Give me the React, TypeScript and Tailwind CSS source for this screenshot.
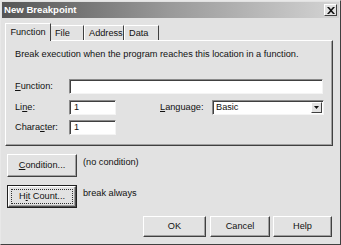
function U({ children }: { children: string }) {
  return <span className="underline underline-offset-[1px]">{children}</span>;
}

function Button({ children, w, h = "h-[22px]", isDefault = false }: { children: React.ReactNode; w: string; h?: string; isDefault?: boolean }) {
  if (isDefault) {
    return (
      <div className={`${w} ${h} border border-[#202020] bg-[#e2e2e2]`}>
        <div className="h-full border border-t-white border-l-white border-r-[#505050] border-b-[#505050] shadow-[inset_-1px_-1px_0_#a0a0a0] p-[2px]">
          <div className="h-full border border-dotted border-[#303030] flex items-center justify-center">{children}</div>
        </div>
      </div>
    );
  }
  return (
    <div
      className={`${w} ${h} flex items-center justify-center bg-[#e2e2e2] border border-t-white border-l-white border-r-[#404040] border-b-[#404040] shadow-[inset_-1px_-1px_0_#a0a0a0]`}
    >
      {children}
    </div>
  );
}

function Field({ w, value }: { w: string; value?: string }) {
  return (
    <div
      className={`${w} h-[15px] bg-white border border-t-[#8a8a8a] border-l-[#8a8a8a] border-r-[#f4f4f4] border-b-[#f4f4f4] shadow-[inset_1px_1px_0_#404040] flex items-center pl-[4px]`}
    >
      {value}
    </div>
  );
}

export default function App() {
  const tabs = ["File", "Address", "Data"];
  const tabWidths = ["w-[33px]", "w-[40px]", "w-[35px]"];

  return (
    <div className="w-[341px] h-[245px] overflow-hidden bg-[#e2e2e2] border border-t-[#e8e8e8] border-l-[#e8e8e8] border-r-[#404040] border-b-[#404040] p-[1px] font-['Liberation_Sans',sans-serif] text-[9.2px] leading-none text-[#111]">
      {/* title bar */}
      <div className="h-[16px] flex items-center justify-between pl-[2px] pr-[2px] bg-gradient-to-r from-[#565656] via-[#9a9a9a] to-[#d4d4d4]">
        <span className="font-bold text-white text-[9.6px]">New Breakpoint</span>
        <div className="w-[13px] h-[12px] flex items-center justify-center bg-[#e2e2e2] border border-t-white border-l-white border-r-[#404040] border-b-[#404040]">
          <svg width="8" height="7" viewBox="0 0 8 7">
            <path d="M0 0h2l2 2.3L6 0h2L5 3.5 8 7H6L4 4.7 2 7H0l3-3.5z" fill="#111" />
          </svg>
        </div>
      </div>

      <div className="ml-[3px] mt-[5px] w-[328px]">
        {/* tabs */}
        <div className="flex items-end h-[17px] pl-[2px]">
          <div className="relative z-10 -mb-px w-[46px] h-[18px] bg-[#e2e2e2] border border-b-0 border-t-white border-l-white border-r-[#404040] -ml-[2px] flex items-start justify-center pt-[4px]">
            Function
          </div>
          {tabs.map((t, i) => (
            <div
              key={t}
              className={`${tabWidths[i]} h-[15px] border border-b-0 border-t-white border-l-white border-r-[#404040] flex items-start pl-[4px] pt-[3px] ${i === 0 ? "border-l-0" : ""}`}
            >
              {t}
            </div>
          ))}
        </div>

        {/* panel */}
        <div className="h-[106px] border border-t-white border-l-white border-r-[#404040] border-b-[#404040] shadow-[inset_-1px_-1px_0_#a0a0a0] pl-[9px] pt-[9px]">
          <div>Break execution when the program reaches this location in a function.</div>

          <div className="mt-[20px] flex items-center">
            <span className="w-[54px]">
              <U>F</U>unction:
            </span>
            <Field w="w-[254px]" />
          </div>

          <div className="mt-[6px] flex items-center">
            <span className="w-[54px]">
              Li<U>n</U>e:
            </span>
            <Field w="w-[47px]" value="1" />
            <span className="ml-[44px] w-[52px]">
              <U>L</U>anguage:
            </span>
            <div className="w-[112px] h-[15px] bg-white border border-t-[#8a8a8a] border-l-[#8a8a8a] border-r-[#f4f4f4] border-b-[#f4f4f4] shadow-[inset_1px_1px_0_#404040] flex items-center justify-between pl-[3px] pr-[1px]">
              <span>Basic</span>
              <div className="w-[11px] h-[11px] bg-[#e2e2e2] border border-t-white border-l-white border-r-[#404040] border-b-[#404040] flex items-center justify-center">
                <svg width="5" height="3" viewBox="0 0 5 3">
                  <path d="M0 0h5L2.5 3z" fill="#111" />
                </svg>
              </div>
            </div>
          </div>

          <div className="mt-[5px] flex items-center">
            <span className="w-[54px]">
              Chara<U>c</U>ter:
            </span>
            <Field w="w-[47px]" value="1" />
          </div>
        </div>

        {/* condition rows */}
        <div className="mt-[8px] ml-[2px] flex items-start gap-[6px]">
          <Button w="w-[70px]" h="h-[23px]">
            <U>C</U>ondition...
          </Button>
          <span className="pt-[4px]">(no condition)</span>
        </div>
        <div className="mt-[8px] ml-[2px] flex items-start gap-[6px]">
          <Button w="w-[70px]" h="h-[23px]" isDefault>
            <span>
              H<U>i</U>t Count...
            </span>
          </Button>
          <span className="pt-[4px]">break always</span>
        </div>

        {/* dialog buttons */}
        <div className="mt-[8px] flex justify-end">
          <div className="flex gap-[4px]">
            <Button w="w-[63px]" h="h-[21px]">OK</Button>
            <Button w="w-[60px]" h="h-[21px]">Cancel</Button>
          </div>
          <div className="ml-[3px] mr-[1px]">
            <Button w="w-[59px]" h="h-[21px]">Help</Button>
          </div>
        </div>
      </div>
    </div>
  );
}
